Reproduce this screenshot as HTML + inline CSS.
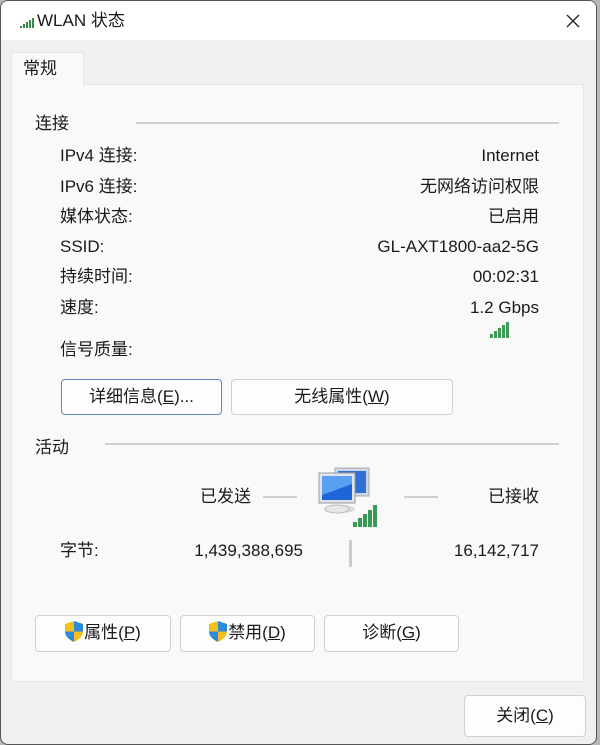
<!DOCTYPE html>
<html><head><meta charset="utf-8"><style>
*{margin:0;padding:0;box-sizing:border-box}
body{width:600px;height:745px;background:#b8b8b8;position:relative;overflow:hidden;font-family:"Liberation Sans","Noto Sans CJK SC",sans-serif;font-size:17px;color:#1a1a1a}
.win{position:absolute;left:0;top:0;width:597px;height:745px;background:#f0f0f0;border:1px solid #555;border-radius:8px;overflow:hidden}
.in{position:absolute;left:-1px;top:-1px;width:597px;height:745px}
.title{position:absolute;left:0;top:0;right:0;height:40px;background:#fff}
.a{position:absolute;white-space:nowrap;line-height:20px}
.r{text-align:right}
.panel{position:absolute;left:11px;top:84px;width:573px;height:598px;background:#f9f9f9;border:1px solid #e6e6e6}
.tab{position:absolute;left:11px;top:52px;width:73px;height:34px;background:#f9f9f9;border:1px solid #e6e6e6;border-bottom:none}
.line{position:absolute;height:2px;background:#d0d0d0}
.btn{position:absolute;background:#fdfdfd;border:1px solid #d0d0d0;border-radius:4px;text-align:center;line-height:34px}
u{text-decoration:underline}
</style></head><body>
<div class="win"><div class="in">
<div class="title">
<svg style="position:absolute;left:20px;top:18px" width="14" height="10"><rect x="0" y="8" width="2" height="2" fill="#3a8a4a"/><rect x="3" y="6" width="2" height="4" fill="#3a8a4a"/><rect x="6" y="4" width="2" height="6" fill="#3a8a4a"/><rect x="9" y="2" width="2" height="8" fill="#3a8a4a"/><rect x="12" y="0" width="2" height="10" fill="#3a8a4a"/></svg>
<div class="a" style="left:37px;top:11px;font-size:17px">WLAN 状态</div>
<svg style="position:absolute;left:566px;top:14px" width="14" height="14"><path d="M1 1L13 13M13 1L1 13" stroke="#222" stroke-width="1.3"/></svg>
</div>
<div class="panel"></div>
<div class="tab"></div>
<div class="a" style="left:23px;top:59px">常规</div>
<div class="a" style="left:35px;top:114px">连接</div>
<div class="line" style="left:136px;top:122px;width:423px"></div>
<div class="a" style="left:60px;top:146px">IPv4 连接:</div><div class="a r" style="right:58px;top:146px">Internet</div>
<div class="a" style="left:60px;top:177px">IPv6 连接:</div><div class="a r" style="right:58px;top:177px">无网络访问权限</div>
<div class="a" style="left:60px;top:207px">媒体状态:</div><div class="a r" style="right:58px;top:207px">已启用</div>
<div class="a" style="left:60px;top:237px">SSID:</div><div class="a r" style="right:58px;top:237px">GL-AXT1800-aa2-5G</div>
<div class="a" style="left:60px;top:267px">持续时间:</div><div class="a r" style="right:58px;top:267px">00:02:31</div>
<div class="a" style="left:60px;top:298px">速度:</div><div class="a r" style="right:58px;top:298px">1.2 Gbps</div>
<svg style="position:absolute;left:490px;top:321px" width="22" height="17"><g fill="#3f9a55"><rect x="0" y="13" width="3" height="4"/><rect x="4" y="10" width="3" height="7"/><rect x="8" y="7" width="3" height="10"/><rect x="12" y="4" width="3" height="13"/><rect x="16" y="1" width="3" height="16"/></g></svg>
<div class="a" style="left:60px;top:340px">信号质量:</div>
<div class="btn" style="left:61px;top:379px;width:161px;height:36px;border-color:#5a8ac0">详细信息(<u>E</u>)...</div>
<div class="btn" style="left:231px;top:379px;width:222px;height:36px">无线属性(<u>W</u>)</div>
<div class="a" style="left:35px;top:438px">活动</div>
<div class="line" style="left:105px;top:443px;width:454px"></div>
<div class="a r" style="right:346px;top:487px">已发送</div>
<div class="line" style="left:263px;top:496px;width:34px"></div>
<svg style="position:absolute;left:317px;top:465px" width="70" height="64">
<rect x="18" y="3" width="34" height="28" fill="#ccd6e6" stroke="#aaa"/><rect x="21" y="6" width="28" height="22" fill="#2f6fd6"/>
<ellipse cx="24" cy="44" rx="14" ry="4" fill="#ddd"/>
<rect x="2" y="8" width="36" height="30" fill="#dfe5ee" stroke="#999"/><rect x="5" y="11" width="30" height="24" fill="#1e66d8"/><path d="M5 11h30v8L5 30z" fill="#5aa0f0"/>
<ellipse cx="20" cy="44" rx="12" ry="4" fill="#e6e6e6" stroke="#bbb"/>
<g fill="#3a9a55"><rect x="36" y="57" width="4" height="5"/><rect x="41" y="53" width="4" height="9"/><rect x="46" y="49" width="4" height="13"/><rect x="51" y="45" width="4" height="17"/><rect x="56" y="40" width="4" height="22"/></g>
</svg>
<div class="line" style="left:404px;top:496px;width:34px"></div>
<div class="a r" style="right:58px;top:487px">已接收</div>
<div class="a" style="left:60px;top:541px">字节:</div>
<div class="a r" style="right:294px;top:541px">1,439,388,695</div>
<div style="position:absolute;left:349px;top:540px;width:3px;height:27px;background:#ccc"></div>
<div class="a r" style="right:58px;top:541px">16,142,717</div>
<svg width="0" height="0" style="position:absolute"><defs><g id="sh"><path d="M9 0L18 3V10C18 16 13 19 9 21C5 19 0 16 0 10V3Z" fill="#f2c019"/><path d="M9 0L18 3V10.5H9ZM0 10.5H9V21C5 19 0 16 0 10.5Z" fill="#2b8ae0"/></g></defs></svg>
<div class="btn" style="left:35px;top:615px;width:136px;height:37px"><svg width="19" height="21" style="vertical-align:-4px"><use href="#sh"/></svg>属性(<u>P</u>)</div>
<div class="btn" style="left:180px;top:615px;width:135px;height:37px"><svg width="19" height="21" style="vertical-align:-4px"><use href="#sh"/></svg>禁用(<u>D</u>)</div>
<div class="btn" style="left:324px;top:615px;width:135px;height:37px">诊断(<u>G</u>)</div>
<div class="btn" style="left:464px;top:695px;width:122px;height:42px;line-height:40px">关闭(<u>C</u>)</div>
</div></div>
</body></html>
